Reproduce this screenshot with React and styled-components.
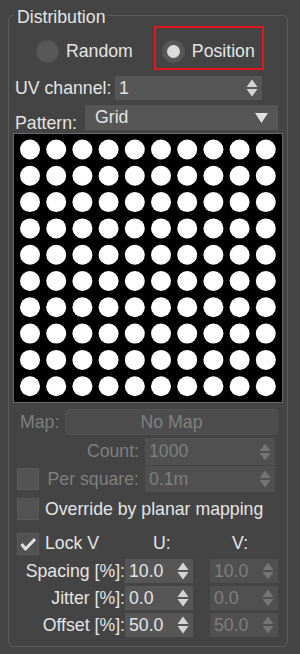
import React from 'react';
import styled, { createGlobalStyle } from 'styled-components';

const GlobalStyle = createGlobalStyle`
  html, body {
    margin: 0;
    padding: 0;
    background: #444444;
  }
  body {
    font-family: "Liberation Sans", Arial, sans-serif;
    font-size: 17.7px;
    color: #e4e4e4;
  }
`;

const Page = styled.div`
  width: 300px;
  height: 654px;
  padding: 15px 0 0 8px;
  box-sizing: border-box;
  background: #444444;
`;

const GroupBox = styled.div`
  position: relative;
  width: 280px;
  height: 632px;
  box-sizing: border-box;
  border: 1px solid #5c5c5c;
  border-radius: 5px;
  display: flex;
  flex-direction: column;
`;

// title sits on top of the group border line
const Legend = styled.span`
  position: absolute;
  top: -9px;
  left: 5px;
  padding: 0 3px;
  line-height: 20px;
  background: #444444;
  color: #e4e4e4;
`;

const Row = styled.div`
  display: flex;
  align-items: ${(p) => p.$align || 'center'};
  height: ${(p) => p.$h}px;
  margin-top: ${(p) => p.$mt}px;
  padding-left: ${(p) => p.$pl || 0}px;
`;

const RadioOption = styled.div`
  display: flex;
  align-items: center;
  gap: 7px;
  height: 100%;
  box-sizing: border-box;
  padding-top: 7px;
  ${(p) =>
    p.$highlight &&
    `
    width: 110px;
    border: 2px solid #e3161d;
    padding-left: 6px;
    margin-left: 21px;
  `}
`;

const RadioDot = styled.span`
  width: 23px;
  height: 23px;
  border-radius: 50%;
  background: #585858;
  box-shadow: inset 0 0 0 1px #505050;
  display: flex;
  align-items: center;
  justify-content: center;

  &::after {
    content: '';
    display: ${(p) => (p.$checked ? 'block' : 'none')};
    width: 13px;
    height: 13px;
    border-radius: 50%;
    background: #dcdcdc;
  }
`;

const Label = styled.span`
  width: ${(p) => (p.$w ? `${p.$w}px` : 'auto')};
  text-align: ${(p) => p.$align || 'left'};
  color: ${(p) => (p.$disabled ? '#7f7f7f' : '#e4e4e4')};
  white-space: nowrap;
  margin-bottom: ${(p) => p.$mb || 0}px;
  box-sizing: border-box;
  flex-shrink: 0;
`;

const SpinBox = styled.div`
  width: ${(p) => p.$w}px;
  height: 100%;
  margin-left: ${(p) => p.$ml || 0}px;
  box-sizing: border-box;
  background: ${(p) => (p.$disabled ? '#505050' : '#565656')};
  display: flex;
  align-items: center;
  padding: 0 4px 0 4px;
  color: ${(p) => (p.$disabled ? '#7f7f7f' : '#e4e4e4')};
  flex-shrink: 0;
`;

const SpinValue = styled.span`
  flex: 1;
  white-space: nowrap;
`;

const Dropdown = styled.div`
  width: 193px;
  height: 25px;
  margin-left: auto;
  margin-right: 9px;
  background: #565656;
  display: flex;
  align-items: center;
  padding: 0 10px;
  box-sizing: border-box;
  color: #e4e4e4;
`;

const Preview = styled.div`
  width: 270px;
  height: 270px;
  margin: 3px 0 0 4px;
  box-sizing: border-box;
  border: 1px solid #6a6a6a;
  background: #000000;
`;

const MapButton = styled.div`
  width: 213px;
  height: 26px;
  margin-left: auto;
  margin-right: 9px;
  border-radius: 5px;
  background: #4d4d4d;
  box-shadow: inset 0 0 0 1px #545454;
  display: flex;
  align-items: center;
  justify-content: center;
  color: #808080;
`;

const CheckBox = styled.span`
  width: 22px;
  height: 22px;
  box-sizing: border-box;
  background: #525252;
  border: 1px solid #5a5a5a;
  display: flex;
  align-items: center;
  justify-content: center;
  flex-shrink: 0;
  margin-left: 8px;
  margin-right: ${(p) => p.$mr || 0}px;
`;

const Arrows = ({ disabled }) => {
  const c = disabled ? '#747474' : '#d4d4d4';
  return (
    <svg width="12" height="20" viewBox="0 0 12 20">
      <path d="M6 1.5 L11.5 9 H0.5 Z" fill={c} />
      <path d="M0.5 11 H11.5 L6 18.5 Z" fill={c} />
    </svg>
  );
};

const Spinner = ({ w, ml, value, disabled }) => (
  <SpinBox $w={w} $ml={ml} $disabled={disabled}>
    <SpinValue>{value}</SpinValue>
    <Arrows disabled={disabled} />
  </SpinBox>
);

const DotGrid = () => {
  const dots = [];
  for (let r = 0; r < 10; r++) {
    for (let c = 0; c < 10; c++) {
      dots.push(<circle key={`${r}-${c}`} cx={16 + c * 26.2} cy={15.5 + r * 26.3} r="10" fill="#ffffff" />);
    }
  }
  return (
    <svg width="268" height="268" viewBox="0 0 268 268" style={{ display: 'block' }}>
      {dots}
    </svg>
  );
};

const Check = () => (
  <svg width="16" height="14" viewBox="0 0 16 14">
    <path d="M1.5 7 L5.5 12 L15 2" fill="none" stroke="#e0e0e0" strokeWidth="3" strokeLinejoin="round" />
  </svg>
);

export default function App() {
  return (
    <Page>
      <GlobalStyle />
      <GroupBox>
        <Legend>Distribution</Legend>

        <Row $h={44} $mt={10} $pl={27}>
          <RadioOption>
            <RadioDot />
            <Label>Random</Label>
          </RadioOption>
          <RadioOption $highlight>
            <RadioDot $checked />
            <Label>Position</Label>
          </RadioOption>
        </Row>

        <Row $h={24} $mt={6} $pl={6}>
          <Label $w={100}>UV channel:</Label>
          <Spinner w={147} value="1" />
        </Row>

        <Row $h={25} $mt={5} $pl={6} $align="flex-end">
          <Label $mb={-4}>Pattern:</Label>
          <Dropdown>
            <span style={{ flex: 1 }}>Grid</span>
            <svg width="13" height="10" viewBox="0 0 13 10">
              <path d="M0 0 H13 L6.5 10 Z" fill="#e0e0e0" />
            </svg>
          </Dropdown>
        </Row>

        <Preview>
          <DotGrid />
        </Preview>

        <Row $h={26} $mt={6} $pl={11}>
          <Label $disabled>Map:</Label>
          <MapButton>No Map</MapButton>
        </Row>

        <Row $h={27} $mt={3}>
          <Label $w={130} $align="right" $disabled>Count:</Label>
          <Spinner w={130} ml={6} value="1000" disabled />
        </Row>

        <Row $h={26} $mt={1}>
          <CheckBox />
          <Label $w={100} $align="right" $disabled>Per square:</Label>
          <Spinner w={130} ml={6} value="0.1m" disabled />
        </Row>

        <Row $h={22} $mt={6}>
          <CheckBox $mr={6} />
          <Label>Override by planar mapping</Label>
        </Row>

        <Row $h={21} $mt={13}>
          <CheckBox $mr={6}>
            <Check />
          </CheckBox>
          <Label $w={108}>Lock V</Label>
          <Label $w={79}>U:</Label>
          <Label>V:</Label>
        </Row>

        {[
          ['Spacing [%]:', '10.0'],
          ['Jitter [%]:', '0.0'],
          ['Offset [%]:', '50.0'],
        ].map(([name, val], i) => (
          <Row key={name} $h={24} $mt={i === 0 ? 5 : 3}>
            <Label $w={116} $align="right">{name}</Label>
            <Spinner w={68} value={val} />
            <Spinner w={68} ml={17} value={val} disabled />
          </Row>
        ))}
      </GroupBox>
    </Page>
  );
}
